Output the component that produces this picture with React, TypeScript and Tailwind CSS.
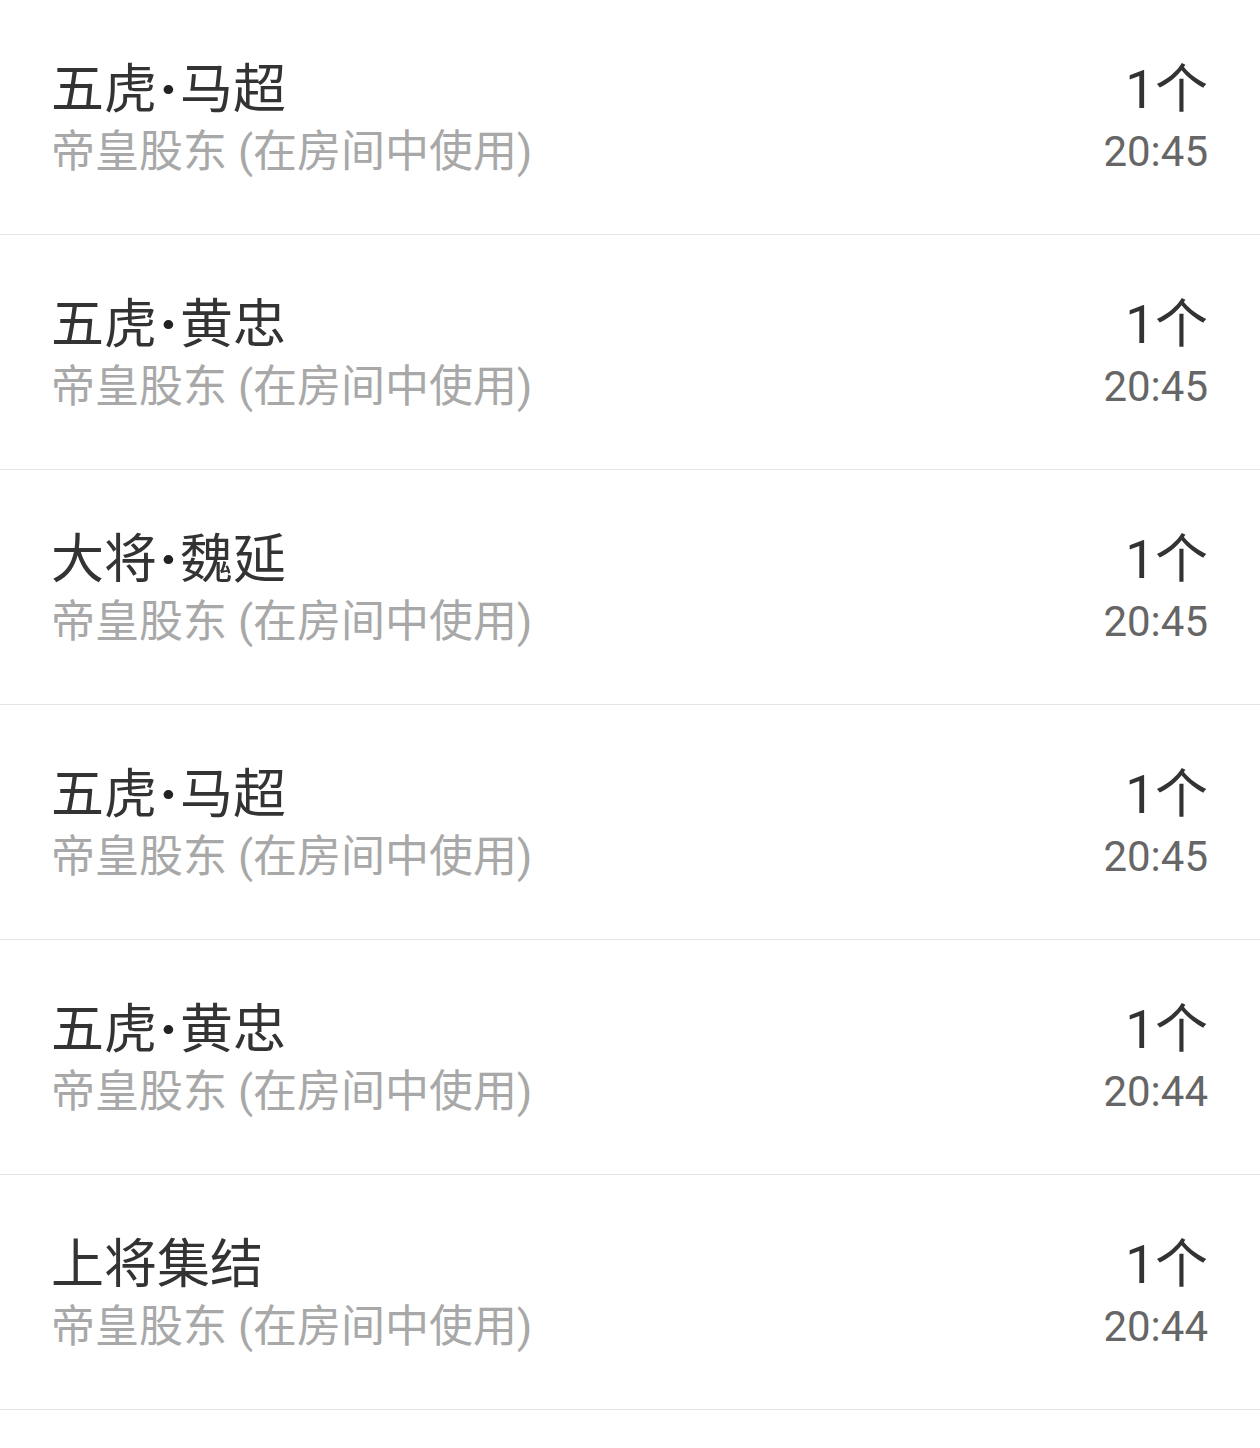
import React from 'react';

interface Record {
  prefix: string;
  name?: string;
  source: string;
  count: string;
  time: string;
}

const records: Record[] = [
  { prefix: '五虎', name: '马超', source: '帝皇股东 (在房间中使用)', count: '1个', time: '20:45' },
  { prefix: '五虎', name: '黄忠', source: '帝皇股东 (在房间中使用)', count: '1个', time: '20:45' },
  { prefix: '大将', name: '魏延', source: '帝皇股东 (在房间中使用)', count: '1个', time: '20:45' },
  { prefix: '五虎', name: '马超', source: '帝皇股东 (在房间中使用)', count: '1个', time: '20:45' },
  { prefix: '五虎', name: '黄忠', source: '帝皇股东 (在房间中使用)', count: '1个', time: '20:44' },
  { prefix: '上将集结', source: '帝皇股东 (在房间中使用)', count: '1个', time: '20:44' },
];

const RecordRow: React.FC<{ record: Record }> = ({ record }) => (
  <div className="flex h-[235px] items-center justify-between border-b border-[#e6e6e6] pl-[51px] pr-[52px] pt-[6px]">
    <div className="flex flex-col">
      <span className="text-[53px] leading-[64px] text-[#333333]">
        {record.prefix}
        {record.name && (
          <>
            <span className="mx-[3px] font-black text-[#222222]">·</span>
            {record.name}
          </>
        )}
      </span>
      <span className="text-[44px] leading-[60px] text-[#a8a8a8]">{record.source}</span>
    </div>
    <div className="flex flex-col items-end">
      <span className="text-[53px] leading-[64px] text-[#333333]">{record.count}</span>
      <span className="text-[42px] leading-[60px] text-[#666666]">{record.time}</span>
    </div>
  </div>
);

export default function App() {
  return (
    <div
      className="min-h-[1448px] w-full bg-white"
      style={{ fontFamily: 'Roboto, "Noto Sans CJK SC", sans-serif' }}
    >
      {records.map((record, index) => (
        <RecordRow key={index} record={record} />
      ))}
    </div>
  );
}
